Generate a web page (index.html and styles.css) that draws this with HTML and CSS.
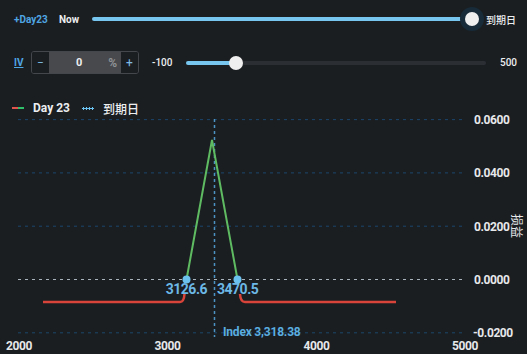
FILE: index.html
```html
<!DOCTYPE html>
<html lang="zh-CN">
<head>
    <meta charset="UTF-8">
    <meta name="viewport" content="width=device-width, initial-scale=1.0">
    <title>损益图</title>
    <link rel="stylesheet" href="styles.css">
</head>
<body>
    <div class="panel">
        <!-- 时间滑块 -->
        <div class="row row-time">
            <span class="tag">+Day23</span>
            <span class="now">Now</span>
            <div class="slider slider-time">
                <div class="track"><div class="fill" style="width: 100%"></div></div>
                <div class="thumb halo" style="left: 100%"></div>
            </div>
            <span class="end">到期日</span>
        </div>

        <!-- IV 调整 -->
        <div class="row row-iv">
            <span class="iv">IV</span>
            <div class="stepper">
                <button class="step">−</button>
                <div class="field">
                    <span class="val">0</span>
                    <span class="unit">%</span>
                </div>
                <button class="step">+</button>
            </div>
            <span class="min">-100</span>
            <div class="slider slider-iv">
                <div class="track"><div class="fill" style="width: 16.7%"></div></div>
                <div class="thumb" style="left: 16.7%"></div>
            </div>
            <span class="max">500</span>
        </div>

        <!-- 图例 -->
        <div class="legend">
            <span class="legend-icon icon-day"></span>
            <span class="legend-text">Day 23</span>
            <span class="legend-icon icon-exp"></span>
            <span class="legend-text">到期日</span>
        </div>

        <!-- 图表 -->
        <svg class="chart" width="527" height="238" viewBox="0 116 527 238">
            <g class="grid">
                <line x1="18" y1="119.6" x2="463" y2="119.6"/>
                <line x1="18" y1="172.9" x2="463" y2="172.9"/>
                <line x1="18" y1="226.2" x2="463" y2="226.2"/>
                <line x1="18" y1="332.8" x2="463" y2="332.8"/>
            </g>
            <line class="zero" x1="18" y1="279.5" x2="463" y2="279.5"/>
            <line class="index-line" x1="214.5" y1="119" x2="214.5" y2="337"/>

            <path class="pl-red" d="M43 302 H180 Q184 302 184.5 294"/>
            <path class="pl-red" d="M240 294 Q240.5 302 245 302 H396"/>
            <path class="pl-green" d="M186.5 279.5 L212 140 L237.5 279.5"/>
            <circle class="dot" cx="186.5" cy="279.5" r="4"/>
            <circle class="dot" cx="237.5" cy="279.5" r="4"/>

            <text class="be" x="207" y="294" text-anchor="end">3126.6</text>
            <text class="be" x="217" y="294">3470.5</text>
            <text class="index" x="223" y="336">Index 3,318.38</text>

            <g class="y-axis">
                <text x="474" y="124">0.0600</text>
                <text x="474" y="177">0.0400</text>
                <text x="474" y="230.5">0.0200</text>
                <text x="474" y="284">0.0000</text>
                <text x="473" y="337">-0.0200</text>
            </g>
            <g class="x-axis">
                <text x="19" y="350">2000</text>
                <text x="167.5" y="350">3000</text>
                <text x="316.5" y="350">4000</text>
                <text x="465" y="350">5000</text>
            </g>
            <text class="y-title" transform="translate(516 226) rotate(90)">损益</text>
        </svg>
    </div>
</body>
</html>
```

FILE: styles.css
```css
* {
    margin: 0;
    padding: 0;
    box-sizing: border-box;
}

body {
    font-family: Roboto, "Noto Sans CJK SC", sans-serif;
    background: #1b1e21;
    color: #eceef0;
    width: 527px;
    height: 354px;
    overflow: hidden;
}

.row {
    display: flex;
    align-items: center;
    padding-left: 14px;
    font-size: 10px;
    font-weight: 700;
}

.row-time {
    margin-top: 7px;
    height: 24px;
}

.row-iv {
    margin-top: 20px;
    height: 23px;
}

.tag {
    width: 45px;
    color: #4fa6e4;
}

.now {
    width: 33px;
}

.end,
.max {
    margin-left: 14px;
}

.end {
    font-weight: 500;
}

.slider {
    position: relative;
    height: 24px;
    display: flex;
    align-items: center;
}

.slider-time {
    width: 380px;
}

.slider-iv {
    width: 300px;
}

.track {
    width: 100%;
    height: 4px;
    border-radius: 2px;
    background: #2b2f34;
    overflow: hidden;
}

.slider-time .track {
    border-radius: 2px 0 0 2px;
}

.fill {
    height: 100%;
    background: #76c6f0;
}

.thumb {
    position: absolute;
    top: 50%;
    width: 14px;
    height: 14px;
    border-radius: 50%;
    background: #efefef;
    transform: translate(-50%, -50%);
}

.thumb.halo {
    box-shadow: 0 0 0 5px #172b38;
}

.iv {
    width: 17px;
    color: #4fa6e4;
    text-decoration: underline;
}

.stepper {
    display: flex;
    width: 108px;
    height: 23px;
    border: 1px solid #44484d;
    border-radius: 3px;
    overflow: hidden;
}

.step {
    width: 17px;
    border: none;
    background: #1b1e21;
    color: #7dbbe4;
    font-family: Roboto, sans-serif;
    font-size: 12px;
}

.field {
    flex: 1;
    display: flex;
    align-items: center;
    background: #47494d;
    padding-left: 27px;
    font-size: 11px;
    font-weight: 700;
}

.val {
    color: #eceef0;
}

.unit {
    margin-left: auto;
    margin-right: 4px;
    color: #8f9295;
    font-size: 12px;
}

.min {
    margin-left: 13px;
    width: 34px;
    font-weight: 500;
}

.max {
    font-weight: 500;
}

.legend {
    display: flex;
    align-items: center;
    margin-top: 26px;
    height: 16px;
    padding-left: 12px;
    font-size: 12px;
    font-weight: 700;
}

.legend-icon {
    width: 12px;
    height: 2px;
}

.icon-day {
    background: linear-gradient(90deg, #e0534d 50%, #2fbf6a 50%);
}

.icon-exp {
    margin-left: 12px;
    height: 3px;
    background: radial-gradient(circle, #6cc4f2 1.2px, transparent 1.4px) 0 0 / 3px 3px repeat-x;
}

.legend-text {
    margin-left: 9px;
}

.legend-text:last-child {
    font-weight: 500;
}

.chart {
    display: block;
    overflow: visible;
    font-family: Roboto, "Noto Sans CJK SC", sans-serif;
}

.grid line {
    stroke: #1b466c;
    stroke-width: 1;
    stroke-dasharray: 3 4;
}

.zero {
    stroke: #a9b3bb;
    stroke-width: 1;
    stroke-dasharray: 3 4;
}

.index-line {
    stroke: #4b93c2;
    stroke-width: 1.5;
    stroke-dasharray: 3 3;
}

.pl-red {
    fill: none;
    stroke: #d8433a;
    stroke-width: 2.5;
}

.pl-green {
    fill: none;
    stroke: #5fbb62;
    stroke-width: 2;
}

.dot {
    fill: #6cc2ef;
}

.be {
    fill: #6cb8e6;
    font-size: 14px;
    font-weight: 700;
    letter-spacing: -0.5px;
}

.index {
    fill: #5aaee0;
    font-size: 12px;
    font-weight: 700;
    letter-spacing: -0.2px;
}

.y-axis text,
.x-axis text {
    fill: #e6e8ea;
    font-size: 12px;
    font-weight: 700;
    letter-spacing: -0.4px;
}

.x-axis text {
    text-anchor: middle;
}

.y-title {
    fill: #e6e8ea;
    font-size: 12px;
    text-anchor: middle;
    dominant-baseline: central;
}
```
